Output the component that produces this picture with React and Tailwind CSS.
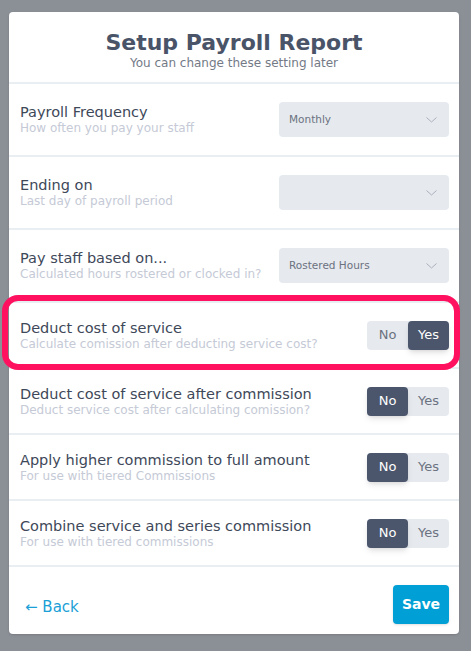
import { useState } from 'react';

const selectRows = [
  { label: 'Payroll Frequency', sub: 'How often you pay your staff', value: 'Monthly' },
  { label: 'Ending on', sub: 'Last day of payroll period', value: '' },
  { label: 'Pay staff based on...', sub: 'Calculated hours rostered or clocked in?', value: 'Rostered Hours' },
];

const toggleRows = [
  { label: 'Deduct cost of service', sub: 'Calculate comission after deducting service cost?', on: true, highlight: true },
  { label: 'Deduct cost of service after commission', sub: 'Deduct service cost after calculating comission?', on: false },
  { label: 'Apply higher commission to full amount', sub: 'For use with tiered Commissions', on: false },
  { label: 'Combine service and series commission', sub: 'For use with tiered commissions', on: false },
];

const Chevron = () => (
  <svg width="11" height="6" viewBox="0 0 11 6" fill="none" className="text-[#aab0bb]">
    <path d="M0.5 0.5 L5.5 5 L10.5 0.5" stroke="currentColor" strokeWidth="1" />
  </svg>
);

const Labels = ({ label, sub }) => (
  <div className="flex flex-col">
    <span className="text-[14.5px] leading-[18px] font-medium text-[#3e4859]">{label}</span>
    <span className="text-[12px] leading-[15px] text-[#c5cad6]">{sub}</span>
  </div>
);

const Toggle = ({ on, onChange }) => (
  <div className="flex h-[29px] w-[82px] rounded bg-[#e6e9ee] text-[13px]">
    <button
      onClick={() => onChange(false)}
      className={`flex-1 rounded ${!on ? 'bg-[#4b566c] text-white shadow-md' : 'text-[#6b7280]'}`}
    >
      No
    </button>
    <button
      onClick={() => onChange(true)}
      className={`flex-1 rounded ${on ? 'bg-[#4b566c] text-white shadow-md' : 'text-[#6b7280]'}`}
    >
      Yes
    </button>
  </div>
);

export default function App() {
  const [toggles, setToggles] = useState(toggleRows.map((r) => r.on));

  return (
    <div className="min-h-[651px] bg-[#8b8f96] pt-[12px] pl-[9px]" style={{ fontFamily: '"DejaVu Sans", sans-serif' }}>
      <div className="w-[450px] rounded bg-white shadow-sm">
        <div className="flex h-[72px] flex-col items-center justify-center border-b-2 border-[#e9eef3] pt-1">
          <h1 className="text-[22px] leading-[27px] font-bold text-[#4a5468]">Setup Payroll Report</h1>
          <p className="text-[12px] leading-[14px] text-[#737a86]">You can change these setting later</p>
        </div>

        {selectRows.map((row) => (
          <div key={row.label} className="flex h-[73px] items-center justify-between border-b-2 border-[#e9eef3] pl-[11px] pr-[10px]">
            <Labels label={row.label} sub={row.sub} />
            <div className="flex h-[35px] w-[170px] items-center justify-between rounded bg-[#e6e9ee] pl-[10px] pr-[12px]">
              <span className="text-[10.5px] text-[#6b7280]">{row.value}</span>
              <Chevron />
            </div>
          </div>
        ))}

        {toggleRows.map((row, i) => (
          <div key={row.label} className="relative flex h-[66px] items-center justify-between border-b-2 border-[#e9eef3] pl-[11px] pr-[10px]">
            <Labels label={row.label} sub={row.sub} />
            <Toggle
              on={toggles[i]}
              onChange={(v) => setToggles(toggles.map((t, j) => (j === i ? v : t)))}
            />
            {row.highlight && (
              <div className="pointer-events-none absolute top-[-8px] bottom-[-3px] left-[-7px] right-[-1px] rounded-[16px] border-[6px] border-[#ff1160]" />
            )}
          </div>
        ))}

        <div className="flex h-[67px] items-center justify-between pl-[16px] pr-[10px] pt-[7px]">
          <button className="mt-[6px] text-[15px] text-[#1a9fd6]">← Back</button>
          <button className="h-[39px] w-[56px] rounded bg-[#009fd5] text-[14px] font-bold text-white shadow">Save</button>
        </div>
      </div>
    </div>
  );
}
